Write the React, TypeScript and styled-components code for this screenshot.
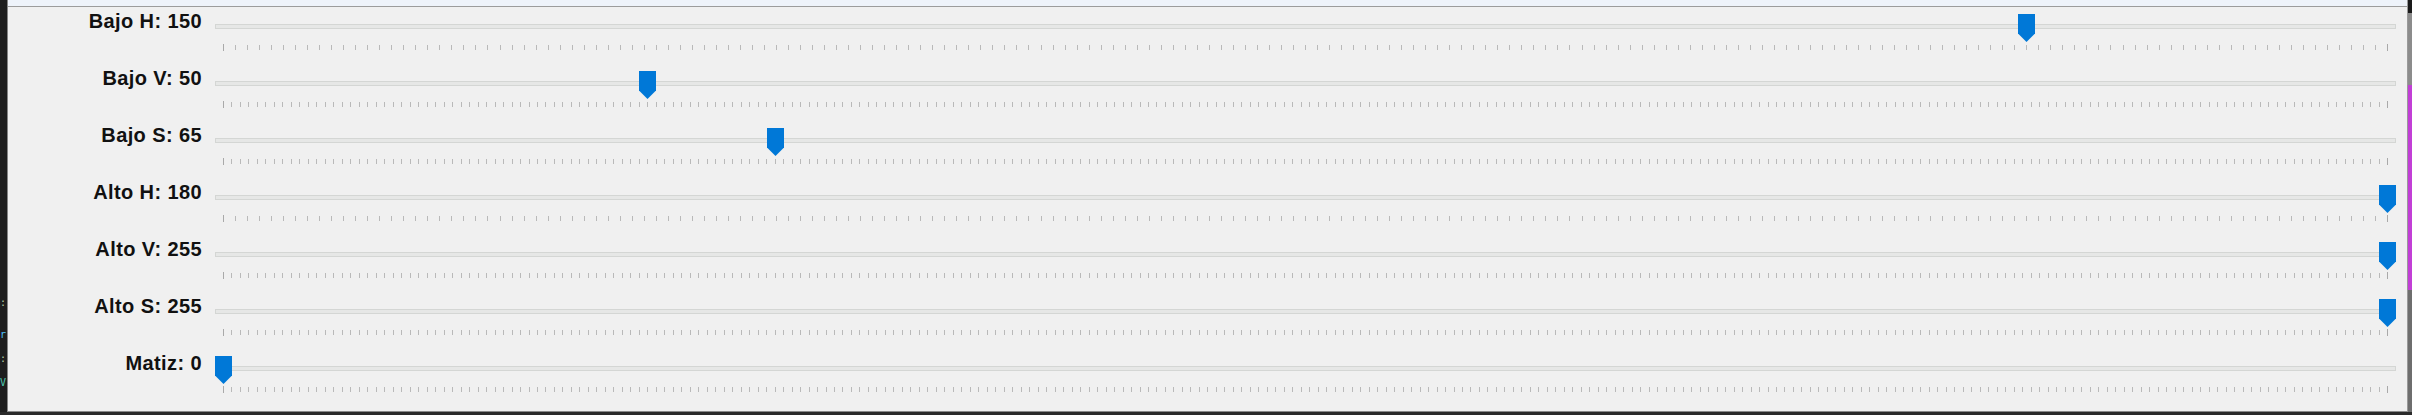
import React from "react";
import styled, { createGlobalStyle } from "styled-components";

const TRAVEL = 2164;
const THUMB_W = 17;

const sliders = [
    { label: "Bajo H: 150", value: 150, max: 180 },
    { label: "Bajo V: 50", value: 50, max: 255 },
    { label: "Bajo S: 65", value: 65, max: 255 },
    { label: "Alto H: 180", value: 180, max: 180 },
    { label: "Alto V: 255", value: 255, max: 255 },
    { label: "Alto S: 255", value: 255, max: 255 },
    { label: "Matiz: 0", value: 0, max: 255 },
];

const codeBits = [
    { text: ":", color: "#b5cea8", top: 296 },
    { text: "r", color: "#4fc1ff", top: 18 },
    { text: ":", color: "#b5cea8", top: 10 },
    { text: "V", color: "#4ec9b0", top: 10 },
];

function Thumb() {
    return (
        <ThumbSvg width="17" height="28" viewBox="0 0 17 28">
            <path d="M0 0 H17 V19.5 L16 20.5 L8.5 28 L1 20.5 L0 19.5 Z" fill="#0078d7" />
        </ThumbSvg>
    );
}

function App() {
    return (
        <>
            <GlobalStyle />
            <Screen>
                <Main>
                    <LeftStrip>
                        {codeBits.map((b, i) => (
                            <CodeBit key={i} $color={b.color} $top={b.top}>
                                {b.text}
                            </CodeBit>
                        ))}
                    </LeftStrip>
                    <Window>
                        <TitleEdge />
                        <Panel>
                            {sliders.map((s) => (
                                <Row key={s.label}>
                                    <Label>{s.label}</Label>
                                    <Slider>
                                        <Track />
                                        <ThumbHolder style={{ left: (s.value / s.max) * TRAVEL }}>
                                            <Thumb />
                                        </ThumbHolder>
                                        <Ticks
                                            style={{
                                                backgroundImage: `repeating-linear-gradient(to right, #b9b9b9 0 1px, transparent 1px ${TRAVEL / s.max}px)`,
                                            }}
                                        />
                                    </Slider>
                                </Row>
                            ))}
                        </Panel>
                    </Window>
                    <RightStrip>
                        <Seg $h={13} $c="#1a1a1a" />
                        <Seg $h={72} $c="#8c8c8c" />
                        <Seg $h={205} $c="#c23fd6" />
                        <Seg $h={122} $c="#6e6e6e" />
                    </RightStrip>
                </Main>
                <BottomStrip />
            </Screen>
        </>
    );
}

export default App;

const GlobalStyle = createGlobalStyle`
    body {
        margin: 0;
        background: #1e1e1e;
        overflow: hidden;
    }
`;

const Screen = styled.div`
    width: 2412px;
    height: 415px;
    display: flex;
    flex-direction: column;
`;

const Main = styled.div`
    height: 412px;
    display: flex;
`;

const LeftStrip = styled.div`
    width: 7px;
    background: #1e1e1e;
    display: flex;
    flex-direction: column;
    overflow: hidden;
`;

const CodeBit = styled.span<{ $color: string; $top: number }>`
    margin-top: ${(p) => p.$top}px;
    color: ${(p) => p.$color};
    font-family: "DejaVu Sans Mono", monospace;
    font-size: 10px;
    line-height: 14px;
    white-space: nowrap;
`;

const Window = styled.div`
    flex: 1;
    display: flex;
    flex-direction: column;
    border-left: 1px solid #858585;
    border-right: 1px solid #9a9a9a;
    border-bottom: 1px solid #8a8a8a;
    background: #f0f0f0;
`;

const TitleEdge = styled.div`
    height: 6px;
    background: #eef3fa;
    border-bottom: 1px solid #9c9c9c;
    flex-shrink: 0;
`;

const Panel = styled.div`
    flex: 1;
    background: #f0f0f0;
`;

const Row = styled.div`
    height: 57px;
    display: grid;
    grid-template-columns: 194px 2181px;
    column-gap: 13px;
`;

const Label = styled.div`
    padding-top: 4px;
    text-align: right;
    font-family: "Liberation Sans", Arial, sans-serif;
    font-weight: bold;
    font-size: 20px;
    line-height: 20px;
    letter-spacing: 0.4px;
    color: #111;
`;

const Slider = styled.div`
    position: relative;
    display: flex;
    flex-direction: column;
`;

const Track = styled.div`
    margin-top: 17px;
    height: 3px;
    background: #e6e7e6;
    border: 1px solid #d4d6d4;
`;

const ThumbHolder = styled.div`
    position: absolute;
    top: 7px;
    width: ${THUMB_W}px;
    height: 28px;
`;

const ThumbSvg = styled.svg`
    display: block;
`;

const Ticks = styled.div`
    position: relative;
    margin-top: 16px;
    margin-left: 8px;
    width: ${TRAVEL + 1}px;
    height: 5px;

    &::before,
    &::after {
        content: "";
        position: absolute;
        top: -1px;
        width: 1px;
        height: 7px;
        background: #a9a9a9;
    }
    &::before {
        left: 0;
    }
    &::after {
        right: 0;
    }
`;

const RightStrip = styled.div`
    width: 4px;
    display: flex;
    flex-direction: column;
`;

const Seg = styled.div<{ $h: number; $c: string }>`
    height: ${(p) => p.$h}px;
    background: ${(p) => p.$c};
    flex-shrink: 0;
`;

const BottomStrip = styled.div`
    height: 3px;
    background: #2a2a2a;
`;
